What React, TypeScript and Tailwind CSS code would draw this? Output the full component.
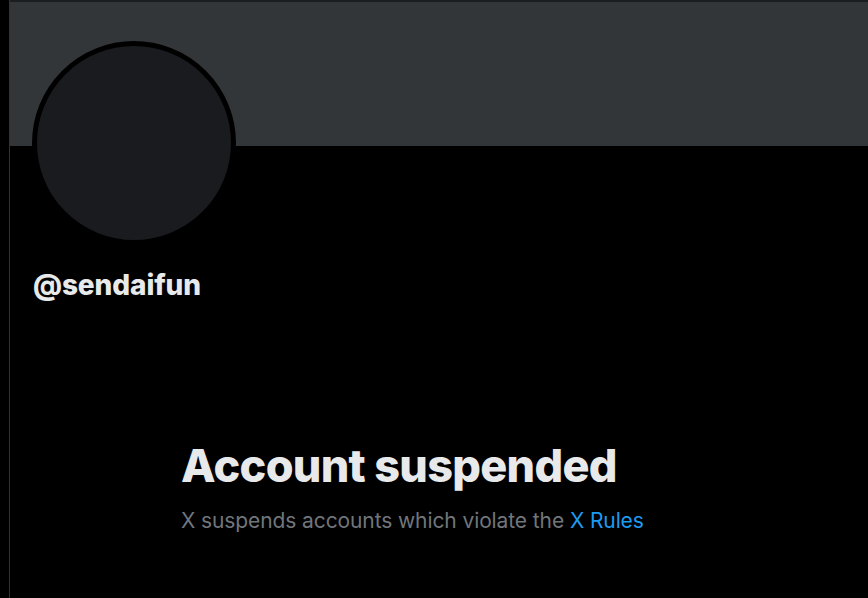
import React from 'react';

const App: React.FC = () => {
  return (
    <div className="flex h-[598px] w-full overflow-hidden bg-black font-['Inter','Liberation_Sans',sans-serif]">
      {/* left gutter */}
      <div className="w-[9px] shrink-0 bg-black" />

      {/* profile column */}
      <div className="flex min-w-0 flex-1 flex-col border-l border-[#2f3336]">
        <div className="h-[2px] bg-[#1b1e21]" />
        <div className="h-[144px] bg-[#333639]" />

        {/* avatar */}
        <div className="-mt-[105px] ml-[22px] h-[204px] w-[204px] rounded-full border-[5px] border-black bg-[#1a1b1f]" />

        {/* handle */}
        <div className="ml-[23px] mt-[24px] text-[28px] leading-[32px] font-extrabold tracking-[-0.1px] text-[#e7e9ea]">
          @sendaifun
        </div>

        {/* suspended message */}
        <div className="ml-[171px] mt-[139px] flex flex-col">
          <h1 className="text-[45px] leading-[52px] font-extrabold tracking-[-0.7px] text-[#e7e9ea]">
            Account suspended
          </h1>
          <p className="mt-[16px] text-[21px] leading-[26px] tracking-[-0.1px] text-[#71767b]">
            X suspends accounts which violate the{' '}
            <a href="#" className="text-[#1d9bf0]">
              X Rules
            </a>
          </p>
        </div>
      </div>
    </div>
  );
};

export default App;
